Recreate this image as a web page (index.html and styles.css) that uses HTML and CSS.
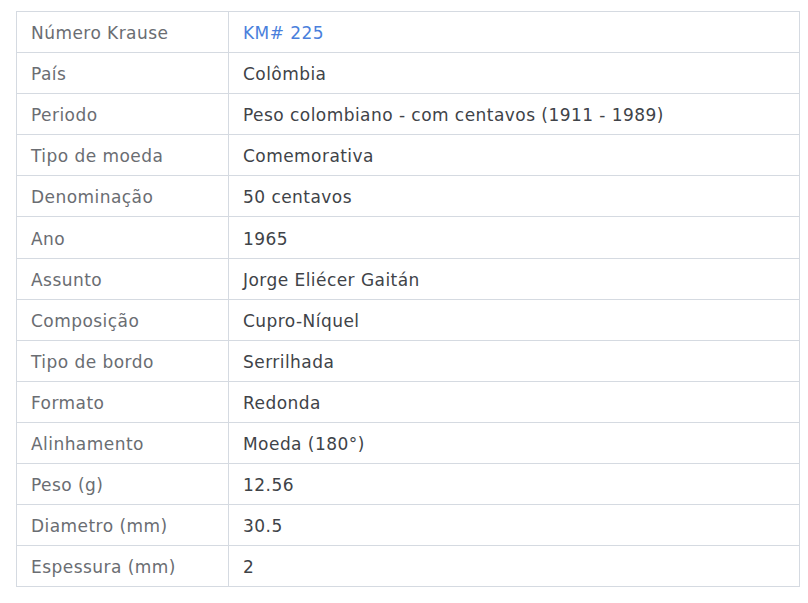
FILE: index.html
```html
<!DOCTYPE html>
<html lang="pt">
<head>
<meta charset="utf-8">
<link rel="stylesheet" href="styles.css">
</head>
<body>
<table class="specs">
<tbody>
<tr><td class="label">Número Krause</td><td class="value"><a class="link" href="#">KM# 225</a></td></tr>
<tr><td class="label">País</td><td class="value">Colômbia</td></tr>
<tr><td class="label">Periodo</td><td class="value">Peso colombiano - com centavos (1911 - 1989)</td></tr>
<tr><td class="label">Tipo de moeda</td><td class="value">Comemorativa</td></tr>
<tr><td class="label">Denominação</td><td class="value">50 centavos</td></tr>
<tr><td class="label">Ano</td><td class="value">1965</td></tr>
<tr><td class="label">Assunto</td><td class="value">Jorge Eliécer Gaitán</td></tr>
<tr><td class="label">Composição</td><td class="value">Cupro-Níquel</td></tr>
<tr><td class="label">Tipo de bordo</td><td class="value">Serrilhada</td></tr>
<tr><td class="label">Formato</td><td class="value">Redonda</td></tr>
<tr><td class="label">Alinhamento</td><td class="value">Moeda (180°)</td></tr>
<tr><td class="label">Peso (g)</td><td class="value">12.56</td></tr>
<tr><td class="label">Diametro (mm)</td><td class="value">30.5</td></tr>
<tr><td class="label">Espessura (mm)</td><td class="value">2</td></tr>
</tbody>
</table>
</body>
</html>
```
FILE: styles.css
```css
html, body {
  margin: 0;
  padding: 0;
  background: #ffffff;
}
body {
  padding: 11px 8px 0 16px;
  font-family: "DejaVu Sans", Verdana, sans-serif;
  font-size: 17px;
  letter-spacing: 0.45px;
}
.specs {
  width: 784px;
  border-collapse: collapse;
  table-layout: fixed;
}
.specs td {
  border: 1px solid #d5dae1;
  height: 41.1px;
  box-sizing: border-box;
  padding: 2px 14px 0;
  vertical-align: middle;
  line-height: 20px;
}
.label {
  width: 212px;
  color: #6a6d72;
}
.value {
  color: #404348;
}
.link {
  color: #4a7fdc;
  text-decoration: none;
}
```
